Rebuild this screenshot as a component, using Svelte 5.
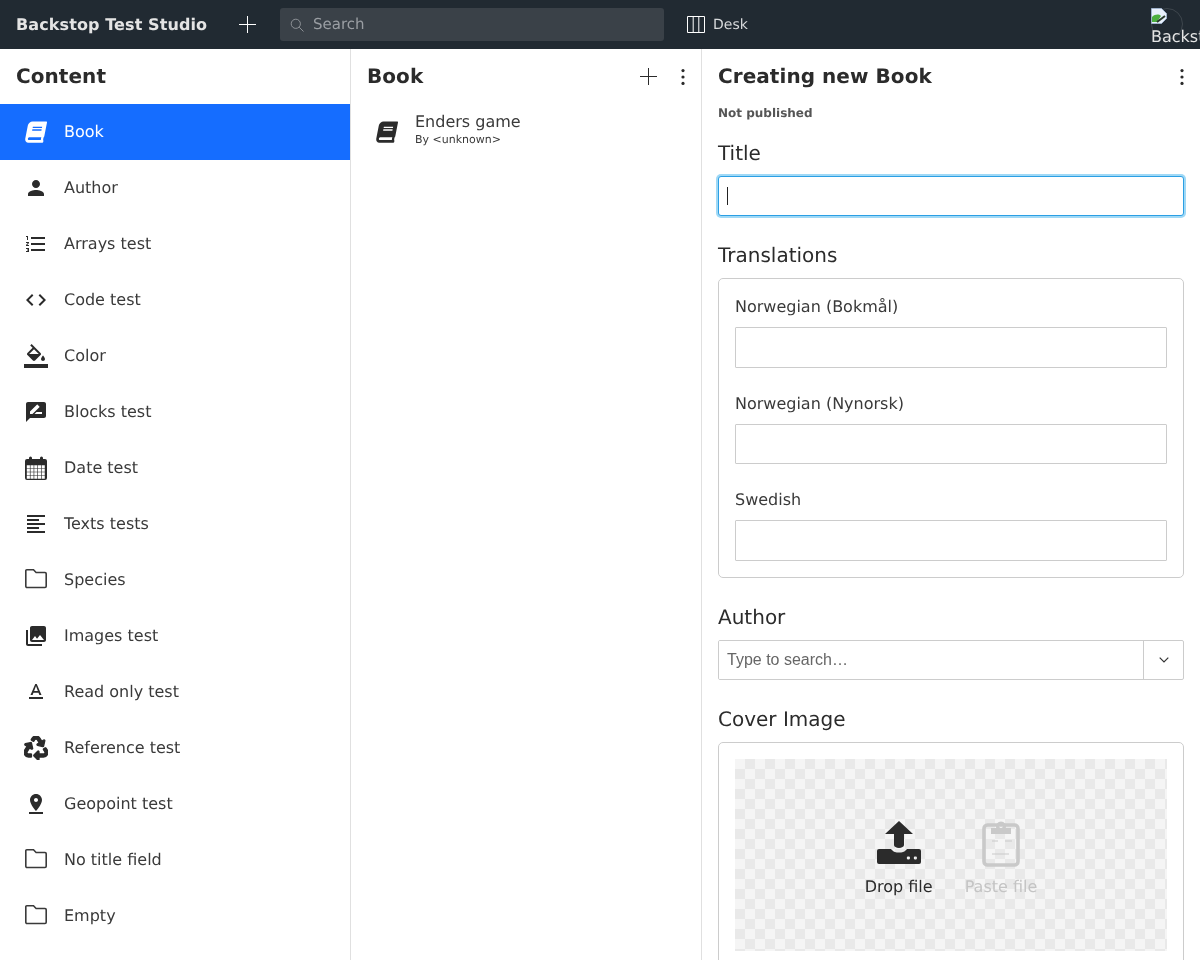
<script>
	const bookPath =
		'M448 360V24c0-13.3-10.7-24-24-24H96C43 0 0 43 0 96v320c0 53 43 96 96 96h328c13.3 0 24-10.7 24-24v-16c0-7.5-3.5-14.3-8.9-18.7-4.2-15.4-4.2-59.3 0-74.7 5.4-4.3 8.9-11.1 8.9-18.6zM128 134c0-3.3 2.7-6 6-6h212c3.3 0 6 2.7 6 6v20c0 3.3-2.7 6-6 6H134c-3.3 0-6-2.7-6-6v-20zm0 64c0-3.3 2.7-6 6-6h212c3.3 0 6 2.7 6 6v20c0 3.3-2.7 6-6 6H134c-3.3 0-6-2.7-6-6v-20zm253.4 250H96c-17.7 0-32-14.3-32-32 0-17.6 14.4-32 32-32h285.4c-1.9 17.1-1.9 46.9 0 64z';

	// calendar: solid shape with the grid cells cut out
	function calendarPath() {
		let d =
			'M3 3h2V2a1.5 1.5 0 0 1 3 0v1h8V2a1.5 1.5 0 0 1 3 0v1h2a2 2 0 0 1 2 2v17a2 2 0 0 1-2 2H3a2 2 0 0 1-2-2V5a2 2 0 0 1 2-2z';
		for (let r = 0; r < 4; r++) {
			for (let c = 0; c < 5; c++) {
				d += `M${2.8 + c * 3.72} ${9.2 + r * 3.55}h3.1v3h-3.1z`;
			}
		}
		return d;
	}

	const folder = { d: 'M1.800 2.800a1 1 0 0 1 1-1h6.700l2.600 2.700h8.900a1.200 1.200 0 0 1 1.200 1.200v12.600a1.200 1.200 0 0 1-1.200 1.200H3a1.200 1.200 0 0 1-1.200-1.200z', outline: true };

	const items = [
		{ label: 'Book', book: true, active: true },
		{ label: 'Author', d: 'M12 12c2.21 0 4-1.79 4-4s-1.79-4-4-4-4 1.79-4 4 1.79 4 4 4zm0 2c-2.67 0-8 1.34-8 4v2h16v-2c0-2.66-5.33-4-8-4z' },
		{ label: 'Arrays test', d: 'M2 17h2v.5H3v1h1v.5H2v1h3v-4H2v1zm1-9h1V4H2v1h1v3zm-1 3h1.8L2 13.1v.9h3v-1H3.2L5 10.9V10H2v1zm5-6v2h14V5H7zm0 14h14v-2H7v2zm0-6h14v-2H7v2z' },
		{ label: 'Code test', d: 'M9.4 16.6L4.8 12l4.6-4.6L8 6l-6 6 6 6 1.4-1.4zm5.2 0l4.6-4.6-4.6-4.6L16 6l6 6-6 6-1.4-1.4z' },
		{ label: 'Color', d: 'M16.56 8.94L7.62 0 6.21 1.41l2.38 2.38-5.15 5.15c-.59.59-.59 1.54 0 2.12l5.5 5.5c.29.29.68.44 1.06.44s.77-.15 1.06-.44l5.5-5.5c.59-.58.59-1.53 0-2.12zM5.21 10L10 5.21 14.79 10H5.21zM19 11.5s-2 2.17-2 3.5c0 1.1.9 2 2 2s2-.9 2-2c0-1.33-2-3.5-2-3.5zM0 20h24v4H0z' },
		{ label: 'Blocks test', d: 'M20 2H4c-1.1 0-2 .9-2 2v18l4-4h14c1.1 0 2-.9 2-2V4c0-1.1-.9-2-2-2zM6 14v-2.47l6.88-6.88c.2-.2.51-.2.71 0l1.77 1.77c.2.2.2.51 0 .71L8.47 14H6zm12 0h-7.5l2-2H18v2z' },
		{ label: 'Date test', d: calendarPath(), evenodd: true },
		{ label: 'Texts tests', d: 'M15 15H3v2h12v-2zm0-8H3v2h12V7zM3 13h18v-2H3v2zm0 8h18v-2H3v2zM3 3v2h18V3H3z' },
		{ label: 'Species', ...folder },
		{ label: 'Images test', d: 'M22 16V4c0-1.1-.9-2-2-2H8c-1.1 0-2 .9-2 2v12c0 1.1.9 2 2 2h12c1.1 0 2-.9 2-2zm-11-4l2.03 2.71L16 11l4 5H8l3-4zM2 6v14c0 1.1.9 2 2 2h14v-2H4V6H2z' },
		{ label: 'Read only test', d: 'M5 17v2h14v-2H5zm4.5-4.2h5l.9 2.2h2.1L12.75 4h-1.5L6.5 15h2.1l.9-2.2zM12 5.98L13.87 11h-3.74L12 5.98z' },
		{ label: 'Reference test', vb: 512, bold: true, d: 'M184.561 261.903c3.232 13.997-12.123 24.635-24.068 17.168l-40.736-25.455-50.867 81.402C55.606 356.273 70.96 384 96.012 384H148c6.627 0 12 5.373 12 12v40c0 6.627-5.373 12-12 12H96.115c-75.334 0-121.302-83.048-81.408-146.88l50.822-81.388-40.725-25.448c-12.081-7.547-8.966-25.961 4.879-29.158l110.237-25.45c8.611-1.988 17.201 3.381 19.189 11.99l25.452 110.237zm98.561-182.915l41.289 66.076-40.74 25.457c-12.051 7.528-9 25.953 4.879 29.158l110.237 25.45c8.672 1.999 17.215-3.438 19.189-11.99l25.45-110.237c3.197-13.844-11.99-24.719-24.068-17.168l-40.687 25.424-41.263-66.082c-37.521-60.033-125.209-60.171-162.816 0l-17.963 28.766c-3.51 5.62-1.8 13.021 3.82 16.533l33.919 21.195c5.62 3.512 13.024 1.803 16.536-3.817l17.961-28.743c12.712-20.341 41.973-19.676 54.257-.022zM497.288 301.12l-27.515-44.065c-3.511-5.623-10.916-7.334-16.538-3.821l-33.861 21.159c-5.62 3.512-7.33 10.915-3.818 16.536l27.564 44.112c13.257 21.211-2.057 48.96-27.136 48.96H320V336.02c0-14.213-17.242-21.383-27.313-11.313l-80 79.981c-6.249 6.248-6.249 16.379 0 22.627l80 79.989C302.689 517.308 320 510.3 320 495.989V448h95.88c75.274 0 121.335-82.997 81.408-146.88z' },
		{ label: 'Geopoint test', d: 'M18 8c0-3.31-2.69-6-6-6S6 4.69 6 8c0 4.5 6 11 6 11s6-6.5 6-11zm-8 0c0-1.1.9-2 2-2s2 .9 2 2-.89 2-2 2c-1.1 0-2-.9-2-2zM5 20v2h14v-2H5z' },
		{ label: 'No title field', ...folder },
		{ label: 'Empty', ...folder }
	];

	const translations = ['Norwegian (Bokmål)', 'Norwegian (Nynorsk)', 'Swedish'];
</script>

{#snippet bookIcon()}
	<svg class="icon" viewBox="0 0 24 24" aria-hidden="true">
		<g transform="translate(1 1.400) skewX(-11) translate(3.600 0) scale(0.0415)">
			<path d={bookPath} fill="currentColor" />
		</g>
	</svg>
{/snippet}

{#snippet plus()}
	<svg class="plus" viewBox="0 0 17 17" aria-hidden="true">
		<path d="M8.500 0v17M0 8.500h17" stroke="currentColor" fill="none" />
	</svg>
{/snippet}

{#snippet dots()}
	<svg class="dots" viewBox="0 0 4 16" aria-hidden="true">
		<circle cx="2" cy="1.6" r="1.6" />
		<circle cx="2" cy="8" r="1.6" />
		<circle cx="2" cy="14.4" r="1.6" />
	</svg>
{/snippet}

<div class="studio">
	<header class="navbar">
		<div class="brand">Backstop Test Studio</div>
		<button class="create">{@render plus()}</button>
		<div class="search">
			<svg viewBox="0 0 14 14" aria-hidden="true">
				<circle cx="5.8" cy="5.8" r="4.6" />
				<path d="M9.2 9.2l4.3 4.3" />
			</svg>
			<span>Search</span>
		</div>
		<div class="tool">
			<svg viewBox="0 0 18 17" aria-hidden="true">
				<path d="M.5.5h17v16H.5zM6.2.5v16M11.8.5v16" />
			</svg>
			<span>Desk</span>
		</div>
		<div class="avatar">
			<div class="broken">
				<svg viewBox="0 0 16 16" aria-hidden="true">
					<path d="M.5.5h10l5 5v5l-5 5h-10z" fill="#e8f0fb" stroke="#9fb2cb" />
					<path d="M1 9c3-3 7-3 9-1l-4 6H1z" fill="#4caf3f" />
					<path d="M6 14l8-6" stroke="#2a3a2c" stroke-width="2" />
				</svg>
				<span>Backstop</span>
			</div>
		</div>
	</header>

	<main class="panes">
		<nav class="pane">
			<div class="pane-head"><h2>Content</h2></div>
			<ul>
				{#each items as item}
					<li class:active={item.active}>
						{#if item.book}
							{@render bookIcon()}
						{:else}
							<svg class="icon" class:outline={item.outline} class:bold={item.bold} viewBox="0 0 {item.vb || 24} {item.vb || 24}" aria-hidden="true">
								<path d={item.d} fill-rule={item.evenodd ? 'evenodd' : 'nonzero'} />
							</svg>
						{/if}
						<span>{item.label}</span>
					</li>
				{/each}
			</ul>
		</nav>

		<section class="pane">
			<div class="pane-head">
				<h2>Book</h2>
				<div class="actions">
					{@render plus()}
					{@render dots()}
				</div>
			</div>
			<div class="doc">
				{@render bookIcon()}
				<div class="doc-text">
					<div class="doc-title">Enders game</div>
					<div class="doc-sub">By &lt;unknown&gt;</div>
				</div>
			</div>
		</section>

		<section class="pane editor">
			<div class="pane-head">
				<h2>Creating new Book</h2>
				{@render dots()}
			</div>
			<div class="status">Not published</div>
			<form class="form">
				<div class="field">
					<div class="label">Title</div>
					<div class="title-input">
						<input type="text" class="focused" />
						<span class="caret"></span>
					</div>
				</div>
				<div class="field">
					<div class="label">Translations</div>
					<div class="box">
						{#each translations as lang}
							<div class="sub-field">
								<div class="sub-label">{lang}</div>
								<input type="text" />
							</div>
						{/each}
					</div>
				</div>
				<div class="field">
					<div class="label">Author</div>
					<div class="select">
						<input type="text" placeholder="Type to search…" />
						<div class="chevron">
							<svg viewBox="0 0 10 6" aria-hidden="true"><path d="M.7.7L5 5l4.3-4.3" /></svg>
						</div>
					</div>
				</div>
				<div class="field">
					<div class="label">Cover Image</div>
					<div class="box">
						<div class="upload">
							<div class="target">
								<svg viewBox="0 0 48 48" aria-hidden="true">
									<path d="M24 1L38 14H29V25a5 3 0 0 1-10 0V14H10z" fill="#2b2b2b" />
									<path fill-rule="evenodd" fill="#2b2b2b" d="M4 29h11c1 0 1.600 .5 2 1 1.400 1.800 4 2.600 7 2.600s5.600-.8 7-2.600c.4-.5 1-1 2-1h11a2 2 0 0 1 2 2v11a2 2 0 0 1-2 2H4a2 2 0 0 1-2-2V31a2 2 0 0 1 2-2zM35 38a1.600 1.600 0 1 0 0 .01zM42 38a1.600 1.600 0 1 0 0 .01z" />
								</svg>
								<span>Drop file</span>
							</div>
							<div class="target disabled">
								<svg viewBox="0 0 48 48" aria-hidden="true">
									<rect class="clip-line" x="7" y="5" width="34" height="40" rx="3.500" />
									<path class="clip-fill" fill-rule="evenodd" d="M14 8h5.200a5 5 0 1 1 9.600 0H34v6H14zM24 4a2 2 0 1 0 .01 0z" />
									<path class="clip-thin" d="M15 21h6M28 21h7M15 34h17" />
								</svg>
								<span>Paste file</span>
							</div>
						</div>
					</div>
				</div>
			</form>
		</section>
	</main>
</div>

<style>
	:global(body) {
		margin: 0;
		background: #fff;
		font-family: 'DejaVu Sans', sans-serif;
		color: #333;
	}

	.studio {
		display: flex;
		flex-direction: column;
		height: 960px;
		overflow: hidden;
		text-rendering: geometricPrecision;
		will-change: transform;
	}

	/* top bar */
	.navbar {
		position: relative;
		display: flex;
		align-items: center;
		flex: none;
		height: 49px;
		padding-left: 16px;
		background: #212a32;
		color: #e4e4e4;
		box-sizing: border-box;
	}
	.brand {
		width: 223px;
		font-size: 16px;
		font-weight: 700;
		letter-spacing: 0.1px;
		white-space: nowrap;
	}
	.create {
		display: flex;
		width: 41px;
		padding: 0;
		border: 0;
		background: none;
		color: #fff;
	}
	.search {
		display: flex;
		align-items: center;
		gap: 9px;
		box-sizing: border-box;
		width: 384px;
		height: 33px;
		padding-left: 10px;
		border-radius: 3px;
		background: #3a4148;
		color: #9a9ea3;
		font-size: 15px;
	}
	.search svg {
		width: 14px;
		height: 14px;
		fill: none;
		stroke: #8d9196;
	}
	.search span {
		margin-bottom: 1px;
	}
	.tool {
		display: flex;
		align-items: center;
		gap: 8px;
		margin-left: 23px;
		font-size: 14px;
		color: #d8dadc;
	}
	.tool svg {
		width: 18px;
		height: 17px;
		fill: none;
		stroke: #fff;
	}
	.avatar {
		position: absolute;
		top: 8px;
		left: 1151px;
		width: 32px;
		height: 32px;
		border: 1px solid #3e464d;
		border-radius: 50%;
		box-sizing: border-box;
	}
	.broken {
		position: absolute;
		top: -1px;
		left: -1px;
		width: 49px;
		overflow: hidden;
		color: #e4e4e4;
		font-size: 16px;
		line-height: 19px;
	}
	.broken svg {
		display: block;
		width: 16px;
		height: 16px;
		margin-bottom: 3px;
	}

	/* panes */
	.panes {
		display: flex;
		flex: 1;
		min-height: 0;
	}
	.pane {
		flex: none;
		box-sizing: border-box;
		width: 351px;
		border-right: 1px solid #e0e0e0;
	}
	.editor {
		flex: 1;
		border-right: 0;
		padding: 0 16px;
	}
	.pane:not(.editor) .pane-head {
		padding: 0 16px;
	}
	.pane-head {
		display: flex;
		align-items: center;
		justify-content: space-between;
		height: 53px;
		margin-bottom: 2px;
		color: #2b2b2b;
	}
	.pane-head h2 {
		margin: 0;
		font-size: 20px;
		font-weight: 700;
		letter-spacing: 0.06px;
	}
	.plus {
		display: block;
		width: 17px;
		height: 17px;
	}
	.dots {
		display: block;
		width: 4px;
		height: 16px;
		fill: #2b2b2b;
		margin-top: 2px;
	}
	.actions {
		display: flex;
		align-items: center;
		gap: 24px;
		margin-top: 1px;
	}

	ul {
		margin: 0;
		padding: 0;
		list-style: none;
	}
	li {
		display: flex;
		align-items: center;
		height: 56px;
		padding-left: 24px;
		gap: 16px;
		font-size: 16px;
		color: #3a3a3a;
	}
	li span {
		margin-bottom: 1px;
	}
	li.active {
		background: #156dff;
		color: #fff;
	}
	.icon {
		display: block;
		flex: none;
		width: 24px;
		height: 24px;
		fill: #2b2b2b;
	}
	li.active .icon {
		fill: #fff;
	}
	.icon.outline {
		fill: none;
		stroke: #3a3a3a;
		stroke-width: 1.600;
	}
	.icon.bold {
		stroke: #2b2b2b;
		stroke-width: 28;
	}

	.doc {
		display: flex;
		align-items: center;
		gap: 16px;
		height: 56px;
		padding-left: 24px;
		color: #2b2b2b;
	}
	.doc-text {
		margin-bottom: 6px;
	}
	.doc-title {
		font-size: 16px;
		line-height: 20px;
		color: #3a3a3a;
	}
	.doc-sub {
		font-size: 11px;
		line-height: 15px;
		color: #3a3a3a;
	}

	/* form */
	.status {
		height: 36px;
		padding-top: 1px;
		font-size: 12px;
		font-weight: 700;
		line-height: 17px;
		color: #555;
		box-sizing: border-box;
	}
	.field {
		margin-bottom: 26px;
	}
	.label {
		margin-bottom: 10px;
		font-size: 20px;
		line-height: 26px;
		color: #2b2b2b;
	}
	input {
		display: block;
		box-sizing: border-box;
		width: 100%;
		height: 40.5px;
		padding: 0 8px;
		border: 1px solid #ccc;
		border-radius: 1px;
		background: #fff;
		font-family: 'Liberation Sans', sans-serif;
		font-size: 16px;
		outline: none;
	}
	.title-input {
		position: relative;
	}
	input.focused {
		height: 40px;
		border-color: #2b9fe4;
		border-radius: 3px;
		box-shadow: 0 0 0 2px #a0d9f6;
	}
	.caret {
		position: absolute;
		top: 11px;
		left: 9px;
		width: 1px;
		height: 18px;
		background: #222;
	}
	.box {
		box-sizing: border-box;
		padding: 16px;
		border: 1px solid #ccc;
		border-radius: 5px;
	}
	.sub-field + .sub-field {
		margin-top: 24px;
	}
	.sub-label {
		margin-bottom: 8px;
		font-size: 16px;
		line-height: 24px;
		color: #3a3a3a;
	}
	.select {
		display: flex;
		box-sizing: border-box;
		height: 40px;
		border: 1px solid #ccc;
		border-radius: 2px;
	}
	.select input {
		flex: 1;
		height: 100%;
		border: 0;
		color: #333;
	}
	.select input::placeholder {
		color: #666;
	}
	.chevron {
		display: flex;
		align-items: center;
		justify-content: center;
		box-sizing: border-box;
		width: 40px;
		border-left: 1px solid #ccc;
	}
	.chevron svg {
		width: 10px;
		height: 6px;
		fill: none;
		stroke: #333;
		stroke-width: 1.2;
	}
	.upload {
		display: flex;
		justify-content: center;
		gap: 32px;
		height: 192px;
		padding-top: 60px;
		box-sizing: border-box;
		background: repeating-conic-gradient(#e9e9e9 0 25%, #f5f5f5 0 50%) 0 0 / 20px 20px;
	}
	.target {
		display: flex;
		flex-direction: column;
		align-items: center;
		gap: 8px;
		margin-top: 1px;
		font-size: 16px;
		line-height: 22px;
		color: #2b2b2b;
	}
	.target svg {
		display: block;
		width: 48px;
		height: 48px;
	}
	.target.disabled {
		color: #c4c4c4;
	}
	.clip-line {
		fill: none;
		stroke: #c9c9c9;
		stroke-width: 3.600;
	}
	.clip-fill {
		fill: #c9c9c9;
	}
	.clip-thin {
		fill: none;
		stroke: #c9c9c9;
		stroke-width: 1.2;
	}
</style>
